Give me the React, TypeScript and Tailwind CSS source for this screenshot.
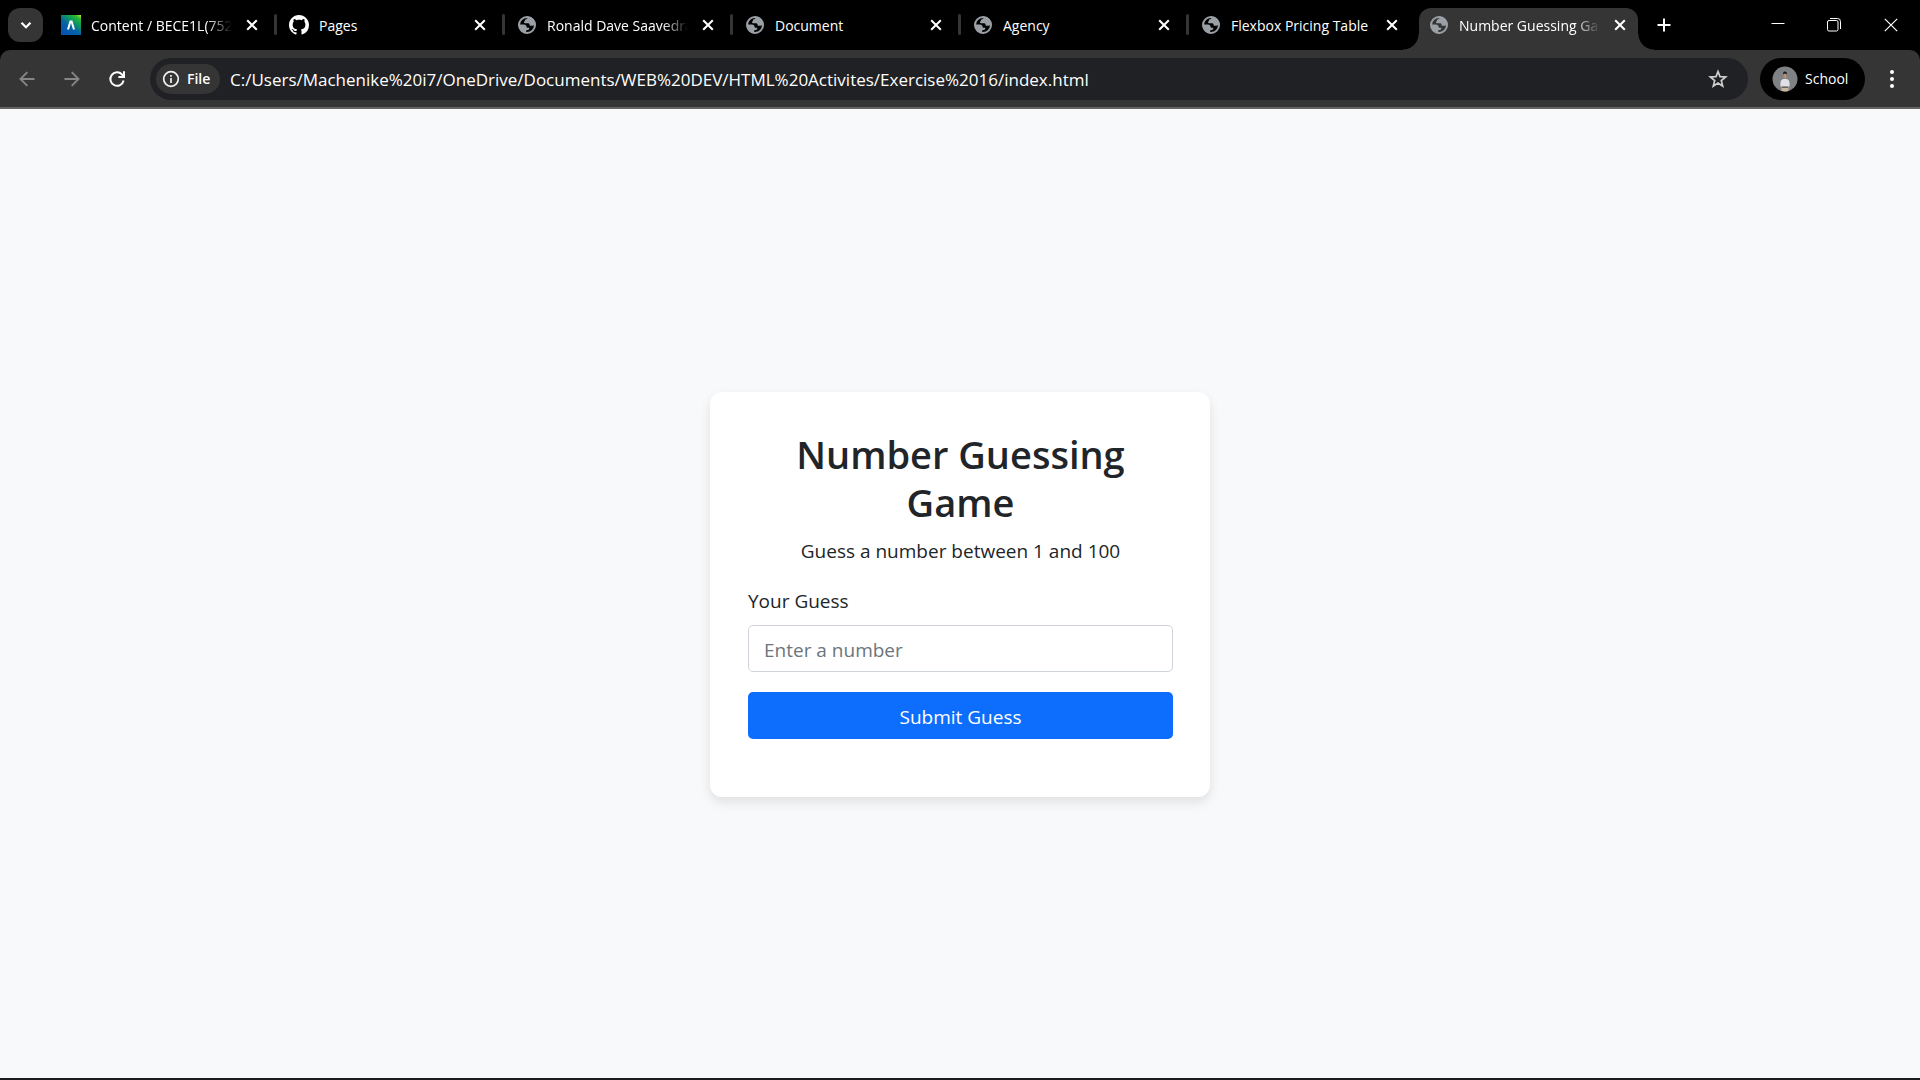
import React from "react";

const TABS = [
  { title: "Content / BECE1L(7523)", icon: "canvas", long: true },
  { title: "Pages", icon: "github" },
  { title: "Ronald Dave Saavedra", icon: "globe", long: true },
  { title: "Document", icon: "globe" },
  { title: "Agency", icon: "globe" },
  { title: "Flexbox Pricing Table", icon: "globe" },
  { title: "Number Guessing Game", icon: "globe", long: true, active: true },
];

function GlobeIcon() {
  return (
    <svg viewBox="0 0 20 20" className="size-5 shrink-0" aria-hidden="true">
      <circle cx="10" cy="10" r="8" fill="none" stroke="#9aa0a6" strokeWidth="2" />
      <path
        fill="#9aa0a6"
        d="M10.6 1.6c.5 1-.1 2-1 2.4-.9.3-1.7.5-1.7 1.5 0 .8-.9 1-.9 1.7 0 .8.8 1.1 1.8 1.1h2.4c1.1 0 1.4.8 1.4 1.6 0 .7.6.9 1.4.9h1.3c.9 0 1.3-.5 1.8-.9l1.4-.4C18.4 4.9 15 1.6 10.6 1.6z"
      />
      <path
        fill="#9aa0a6"
        d="M1.7 9.4h5.2c1.7 0 2.7 1 2.7 2.3 0 .8.5 1.1 1.2 1.1h.7c.7 0 .9.5.7 1.1-.3.8-1.2 1-2 1-.7 0-1 .5-1 1.2v2.2C4.8 18 1.6 14.4 1.7 9.4z"
      />
    </svg>
  );
}

function GithubIcon() {
  return (
    <svg viewBox="0 0 16 16" className="size-5 shrink-0" fill="#fff" aria-hidden="true">
      <path d="M8 0C3.58 0 0 3.58 0 8c0 3.54 2.29 6.53 5.47 7.59.4.07.55-.17.55-.38 0-.19-.01-.82-.01-1.49-2.01.37-2.53-.49-2.69-.94-.09-.23-.48-.94-.82-1.13-.28-.15-.68-.52-.01-.53.63-.01 1.08.58 1.23.82.72 1.21 1.87.87 2.33.66.07-.52.28-.87.51-1.07-1.78-.2-3.64-.89-3.64-3.95 0-.87.31-1.59.82-2.15-.08-.2-.36-1.02.08-2.12 0 0 .67-.21 2.2.82.64-.18 1.32-.27 2-.27s1.36.09 2 .27c1.53-1.04 2.2-.82 2.2-.82.44 1.1.16 1.92.08 2.12.51.56.82 1.27.82 2.15 0 3.07-1.87 3.75-3.65 3.95.29.25.54.73.54 1.48 0 1.07-.01 1.93-.01 2.2 0 .21.15.46.55.38A8.01 8.01 0 0 0 16 8c0-4.42-3.58-8-8-8z" />
    </svg>
  );
}

function CanvasIcon() {
  return (
    <svg viewBox="0 0 20 20" className="size-5 shrink-0" aria-hidden="true">
      <defs>
        <linearGradient id="tile" x1="0.25" y1="1" x2="1" y2="0">
          <stop offset="0" stopColor="#0553b5" />
          <stop offset="0.35" stopColor="#0561a8" />
          <stop offset="0.65" stopColor="#0f9d58" />
          <stop offset="0.85" stopColor="#2db834" />
          <stop offset="1" stopColor="#e8ea10" />
        </linearGradient>
      </defs>
      <rect width="20" height="20" fill="url(#tile)" />
      <path d="M7 14.5 9.4 6.5h1.2L13 14.5" fill="none" stroke="#fff" strokeWidth="2" />
    </svg>
  );
}

function CloseIcon() {
  return (
    <svg viewBox="0 0 20 20" className="size-5" fill="none" stroke="#fff" strokeWidth="2" aria-hidden="true">
      <path d="M5.2 5.2l9.6 9.6M14.8 5.2l-9.6 9.6" />
    </svg>
  );
}

type TabProps = { title: string; icon: string; long?: boolean; active?: boolean };

function Tab({ title, icon, long, active }: TabProps) {
  return (
    <div
      className={
        active
          ? "relative mt-2 flex h-[42px] w-[219px] min-w-0 items-center gap-[10px] rounded-t-xl bg-[#353535] pr-2 pb-2 pl-[10px]"
          : "relative mt-2 flex h-[42px] w-[219px] min-w-0 items-center gap-[10px] pr-2 pb-2 pl-[10px]"
      }
    >
      {active && (
        <>
          <span className="absolute bottom-0 -left-4 size-4 bg-[radial-gradient(circle_at_0_0,transparent_15px,#353535_16px)]" />
          <span className="absolute -right-4 bottom-0 size-4 bg-[radial-gradient(circle_at_100%_0,transparent_15px,#353535_16px)]" />
        </>
      )}
      {icon === "canvas" ? <CanvasIcon /> : icon === "github" ? <GithubIcon /> : <GlobeIcon />}
      <span
        className={
          long
            ? "min-w-0 flex-1 overflow-hidden [mask-image:linear-gradient(to_right,#000_82%,transparent)] pt-px text-[14px] leading-5 whitespace-nowrap text-white"
            : "min-w-0 flex-1 overflow-hidden pt-px text-[14px] leading-5 whitespace-nowrap text-white"
        }
      >
        {title}
      </span>
      <button type="button" aria-label={`Close ${title}`} className="size-5 shrink-0">
        <CloseIcon />
      </button>
    </div>
  );
}

function TabStrip() {
  return (
    <div className="flex h-[50px] items-start bg-black pl-2">
      <button
        type="button"
        aria-label="Search tabs"
        className="mt-2 mr-2 flex h-[34px] w-[35px] shrink-0 items-center justify-center rounded-xl bg-[#353535]"
      >
        <svg viewBox="0 0 14 14" className="size-[14px]" fill="none" stroke="#fff" strokeWidth="2.2" aria-hidden="true">
          <path d="M2.5 4.8 7 9.3l4.5-4.5" />
        </svg>
      </button>
      <div className="flex min-w-0">
        {TABS.map((tab, i) => (
          <React.Fragment key={tab.title}>
            {i > 0 && (
              <span
                className={
                  tab.active
                    ? "mx-[3px] w-[3px] shrink-0"
                    : "mt-[14px] mr-[2px] ml-1 h-[21px] w-[3px] shrink-0 rounded-full bg-[#353535]"
                }
              />
            )}
            <Tab {...tab} />
          </React.Fragment>
        ))}
      </div>
      <button type="button" aria-label="New tab" className="mt-[15px] ml-4 size-5 shrink-0">
        <svg viewBox="0 0 20 20" className="size-5" fill="none" stroke="#fff" strokeWidth="2" aria-hidden="true">
          <path d="M10 3.5v13M3.5 10h13" />
        </svg>
      </button>
      <div className="ml-auto flex h-[50px] shrink-0">
        <button type="button" aria-label="Minimize" className="flex w-14 items-center justify-center">
          <svg viewBox="0 0 14 14" className="size-[14px]" aria-hidden="true">
            <path d="M.5 5.5h13" stroke="#fff" />
          </svg>
        </button>
        <button type="button" aria-label="Restore" className="flex w-14 items-center justify-center">
          <svg viewBox="0 0 14 14" className="size-[14px]" fill="none" stroke="#fff" aria-hidden="true">
            <rect x=".5" y="2.5" width="10.5" height="10.5" rx="1.5" />
            <path d="M3 .5h7.5a3 3 0 0 1 3 3V11" />
          </svg>
        </button>
        <button type="button" aria-label="Close window" className="flex w-[58px] items-center justify-center">
          <svg viewBox="0 0 14 14" className="size-[14px]" fill="none" stroke="#fff" strokeWidth="1.2" aria-hidden="true">
            <path d="M.8.8l12.4 12.4M13.2.8.8 13.2" />
          </svg>
        </button>
      </div>
    </div>
  );
}

function ArrowLeft() {
  return (
    <svg viewBox="0 0 18 18" className="size-[18px]" fill="none" stroke="#868686" strokeWidth="1.9" aria-hidden="true">
      <path d="M16.5 9H3M9.3 2.2 2.5 9l6.8 6.8" />
    </svg>
  );
}

function Toolbar() {
  return (
    <div className="bg-black">
      <div className="flex h-[59px] items-center rounded-t-[10px] border-b-2 border-[#656464] bg-[#353535] pr-[18px]">
        <nav className="ml-[18px] flex shrink-0 items-center gap-[27px]" aria-label="History">
          <button type="button" aria-label="Back">
            <ArrowLeft />
          </button>
          <button type="button" aria-label="Forward" className="rotate-180">
            <ArrowLeft />
          </button>
          <button type="button" aria-label="Reload">
            <svg viewBox="0 0 18 18" className="size-[18px]" fill="none" stroke="#fff" strokeWidth="2" aria-hidden="true">
              <path d="M15.6 10.5A6.7 6.7 0 1 1 14 4.5L15.5 6" />
              <path d="M16 1.3v5.6h-5.6" />
            </svg>
          </button>
        </nav>
        <div className="ml-6 flex h-[42px] min-w-0 flex-1 items-center rounded-full bg-[#202124] pr-5 pl-[6px]">
          <button
            type="button"
            className="flex h-[30px] w-16 shrink-0 items-center gap-[7px] rounded-full bg-[#353535] pl-[6px] text-[14px] font-semibold text-white"
          >
            <svg viewBox="0 0 18 18" className="size-[18px]" fill="none" stroke="#f1f1f1" strokeWidth="1.7" aria-hidden="true">
              <circle cx="9" cy="9" r="7.3" />
              <path d="M9 8v5M9 5v1.8" />
            </svg>
            File
          </button>
          <input
            type="text"
            aria-label="Address"
            defaultValue="C:/Users/Machenike%20i7/OneDrive/Documents/WEB%20DEV/HTML%20Activites/Exercise%2016/index.html"
            className="ml-[10px] min-w-0 flex-1 bg-transparent pt-[2px] text-[17px] leading-6 text-white outline-none"
          />
          <button type="button" aria-label="Bookmark this page" className="shrink-0">
            <svg viewBox="0 0 20 20" className="size-5" fill="none" stroke="#d0d0d0" strokeWidth="1.7" aria-hidden="true">
              <path d="M10 2.5l2 5.1 5.7.4-4.4 3.6 1.4 5.5L10 14.1l-4.7 3 1.4-5.5L2.3 8 8 7.6z" />
            </svg>
          </button>
        </div>
        <button
          type="button"
          className="ml-3 flex h-[42px] w-[105px] shrink-0 items-center gap-[7px] rounded-full bg-black pl-3 text-[14px] text-white"
        >
          <svg viewBox="0 0 26 26" className="size-[26px]" aria-hidden="true">
            <defs>
              <clipPath id="avatar">
                <circle cx="13" cy="13" r="12.5" />
              </clipPath>
            </defs>
            <g clipPath="url(#avatar)">
              <rect width="26" height="26" fill="#7f8284" />
              <path d="M9.5 20h7v6h-7z" fill="#c8b8a2" />
              <path d="M9 21.5c-1-2.5-.8-5.5.4-7.3.8-1 1.8-1.2 3.6-1.2s2.8.2 3.6 1.2c1.2 1.8 1.4 4.8.4 7.3z" fill="#dfe1e6" />
              <path d="M9.5 20.5h7v1.2h-7z" fill="#4b4038" />
              <ellipse cx="13" cy="9.5" rx="1.6" ry="3" fill="#b98f79" />
              <path d="M11 9c-.3-2.5.7-3.5 2-3.5s2.300 1 2 3.500l-.6-1.300h-2.800z" fill="#1d1b1c" />
            </g>
          </svg>
          School
        </button>
        <button type="button" aria-label="Menu" className="ml-[17px] shrink-0">
          <svg viewBox="0 0 20 20" className="size-5" fill="#fff" aria-hidden="true">
            <circle cx="10" cy="3" r="2" />
            <circle cx="10" cy="10" r="2" />
            <circle cx="10" cy="17" r="2" />
          </svg>
        </button>
      </div>
    </div>
  );
}

function GuessCard() {
  return (
    <main className="w-[500px] max-w-full rounded-xl bg-white pt-[38px] pr-[37px] pb-[58px] pl-[38px] shadow-[0_5px_12px_rgba(0,0,0,0.1)]">
      <h1 className="mb-[10px] text-center text-[38px] leading-[48px] font-semibold">Number Guessing Game</h1>
      <p className="mb-5 text-center text-[19px] leading-[30px]">Guess a number between 1 and 100</p>
      <form onSubmit={(e) => e.preventDefault()}>
        <label htmlFor="guess" className="mb-[9px] block text-[19px] leading-[30px]">
          Your Guess
        </label>
        <input
          id="guess"
          type="number"
          placeholder="Enter a number"
          className="mb-5 block h-[47px] w-full rounded-[5px] border border-[#ced4da] bg-white px-[15px] pt-[2px] text-[19px] leading-[30px] outline-none placeholder:text-[#6c757d]"
        />
        <button
          type="submit"
          className="block h-[47px] w-full rounded-[5px] bg-[#0d6efd] pt-[2px] text-[19px] leading-[30px] text-white"
        >
          Submit Guess
        </button>
      </form>
    </main>
  );
}

export default function App() {
  return (
    <div className="flex min-h-screen flex-col font-['Open_Sans','Noto_Sans',sans-serif] text-[#212529]">
      <header>
        <TabStrip />
        <Toolbar />
      </header>
      <div className="flex flex-1 items-center justify-center border-b-2 border-[#1c1c1f] bg-[#f8f9fb] pt-[2px]">
        <GuessCard />
      </div>
    </div>
  );
}
